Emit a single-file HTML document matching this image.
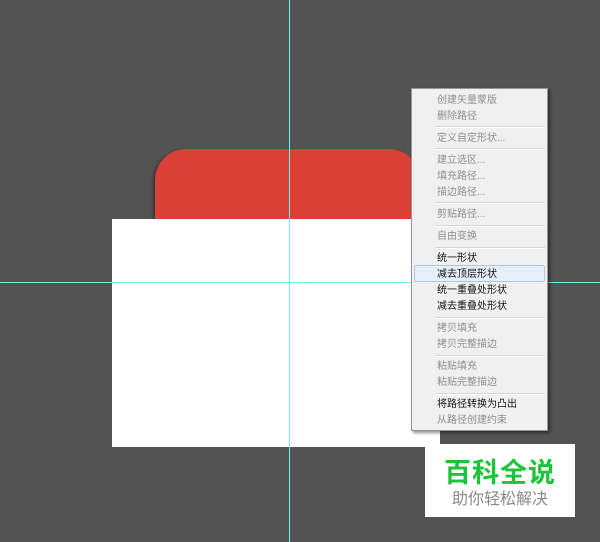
<!DOCTYPE html>
<html><head><meta charset="utf-8"><style>
body{margin:0;width:600px;height:542px;background:#535353;position:relative;overflow:hidden;font-family:"Liberation Sans","Noto Sans CJK SC",sans-serif}
.abs{position:absolute}
#red{left:155px;top:149px;width:265px;height:80px;background:#da4036;border-radius:31px 31px 0 0;box-shadow:-2px 1px 3px rgba(0,0,0,.35)}
#white{left:112px;top:219px;width:328px;height:228px;background:#fff}
.vg{left:289px;top:0;width:1px;height:542px;background:#6ff0f4}
.hg{left:0;top:282px;width:600px;height:1px;background:#6ff0f4}
#menu{left:411px;top:88px;width:135px;height:341px;background:#f0f0f0;border:1px solid #979797;box-shadow:2px 2px 3px rgba(0,0,0,.45)}
#menu .it{position:absolute;left:25px;font-size:10px;line-height:16px;color:#8e8e8e;white-space:nowrap}
#menu .b{color:#111}
#menu .sep{position:absolute;left:24px;right:2px;height:1px;background:#d6d6d6;border-bottom:1px solid #fff}
#menu .hl{position:absolute;left:2px;right:2px;height:15px;background:#e6eef8;border:1px solid #a8c8ec;border-radius:2px}
#wm{left:425px;top:444px;width:150px;height:73px;background:#fff;text-align:center}
#wm .t{font-size:27px;color:#1dc43a;font-weight:bold;line-height:30px;margin-top:14px;letter-spacing:1px}
#wm .s{font-size:16px;color:#8a8a8a;line-height:20px;margin-top:2px}
</style></head><body>
<div class="abs" id="red"></div>
<div class="abs" id="white"></div>
<div class="abs vg"></div>
<div class="abs hg"></div>
<div class="abs" id="menu">
<div class="hl" style="top:176px"></div>
<div class="it" style="top:4px">创建矢量蒙版</div>
<div class="it" style="top:20px">删除路径</div>
<div class="sep" style="top:37px"></div>
<div class="it" style="top:42px">定义自定形状...</div>
<div class="sep" style="top:59px"></div>
<div class="it" style="top:64px">建立选区...</div>
<div class="it" style="top:80px">填充路径...</div>
<div class="it" style="top:96px">描边路径...</div>
<div class="sep" style="top:113px"></div>
<div class="it" style="top:118px">剪贴路径...</div>
<div class="sep" style="top:136px"></div>
<div class="it" style="top:140px">自由变换</div>
<div class="sep" style="top:158px"></div>
<div class="it b" style="top:162px">统一形状</div>
<div class="it b" style="top:178px">减去顶层形状</div>
<div class="it b" style="top:194px">统一重叠处形状</div>
<div class="it b" style="top:210px">减去重叠处形状</div>
<div class="sep" style="top:228px"></div>
<div class="it" style="top:232px">拷贝填充</div>
<div class="it" style="top:248px">拷贝完整描边</div>
<div class="sep" style="top:266px"></div>
<div class="it" style="top:270px">粘贴填充</div>
<div class="it" style="top:286px">粘贴完整描边</div>
<div class="sep" style="top:304px"></div>
<div class="it b" style="top:308px">将路径转换为凸出</div>
<div class="it" style="top:324px">从路径创建约束</div>
</div>
<div class="abs" id="wm"><div class="t">百科全说</div><div class="s">助你轻松解决</div></div>
</body></html>
